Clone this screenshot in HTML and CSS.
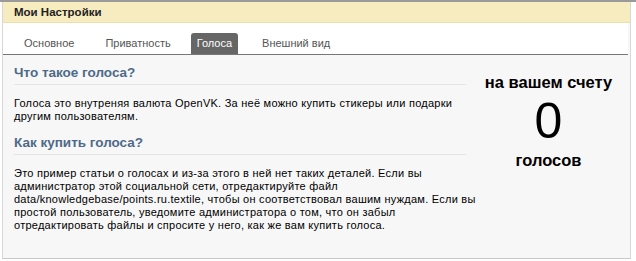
FILE: index.html
```html
<!DOCTYPE html>
<html lang="ru">
<head>
  <meta charset="UTF-8">
  <title>Мои Настройки</title>
  <link rel="stylesheet" href="styles.css">
</head>
<body>
  <div class="page">
    <div class="settings">
      <!-- заголовок -->
      <div class="settings_head">Мои Настройки</div>

      <!-- вкладки -->
      <div class="tabs">
        <a class="tab">Основное</a>
        <a class="tab">Приватность</a>
        <a class="tab active">Голоса</a>
        <a class="tab">Внешний вид</a>
      </div>

      <!-- содержимое -->
      <div class="content">
        <div class="article">
          <h4>Что такое голоса?</h4>
          <p>Голоса это внутреняя валюта OpenVK. За неё можно купить стикеры или подарки другим пользователям.</p>
          <h4>Как купить голоса?</h4>
          <p class="wide">Это пример статьи о голосах и из-за этого в ней нет таких деталей. Если вы администратор этой социальной сети, отредактируйте файл data/knowledgebase/points.ru.textile, чтобы он соответствовал вашим нуждам. Если вы простой пользователь, уведомите администратора о том, что он забыл отредактировать файлы и спросите у него, как же вам купить голоса.</p>
        </div>
        <div class="balance">
          <div class="balance_label">на вашем счету</div>
          <div class="balance_num">0</div>
          <div class="balance_label">голосов</div>
        </div>
      </div>
    </div>
  </div>
</body>
</html>
```

FILE: styles.css
```css
body {margin: 0; background: #fff; font-family: Tahoma, "Liberation Sans", sans-serif; font-size: 11px; color: #000;}

.page {border-top: 2px solid #9a9a9a;}
.settings {margin: 0 5px 0 2px; border-left: 1px solid #d8d8d8; border-right: 1px solid #d8d8d8; border-bottom: 1px solid #c9c9c9; background: #f7f7f7;}

/* header */
.settings_head {background: #f6ecc0; border-bottom: 1px solid #ebe0b0; height: 20px; line-height: 20px; padding: 0 11px; font-weight: bold; font-size: 11.5px; color: #222;}

/* tabs */
.tabs {display: flex; align-items: flex-end; background: #fff; height: 31px; padding: 0 0 0 10px; margin-right: 2px; border-bottom: 1px solid #777;}
.tab {display: block; padding: 0 11px; height: 21px; line-height: 21px; color: #555; font-size: 11px; margin-right: 9px;}
.tab.active {background: #666; color: #fff; border-radius: 3px 3px 0 0; padding: 0 6px; margin-right: 13px;}

/* content */
.content {display: flex; padding: 10px 0 26px 11px;}
.article {width: 458px;}
.article h4 {margin: 0 6px 12px 0; padding: 0 0 4px; border-bottom: 1px solid #e4e4e4; color: #4e6a88; font-size: 13.5px; font-weight: bold;}
.article p {margin: 0 0 12px; line-height: 13px; letter-spacing: 0.25px;}
.article p.wide {margin-right: -12px;}
.article p:last-child {margin-bottom: 0;}

.balance {flex: 1; text-align: center; padding: 8px 5px 0 0;}
.balance_label {font-weight: bold; font-size: 16.5px;}
.balance_num {font-size: 50px; line-height: 52px; margin: 3px 0 4px;}
```
